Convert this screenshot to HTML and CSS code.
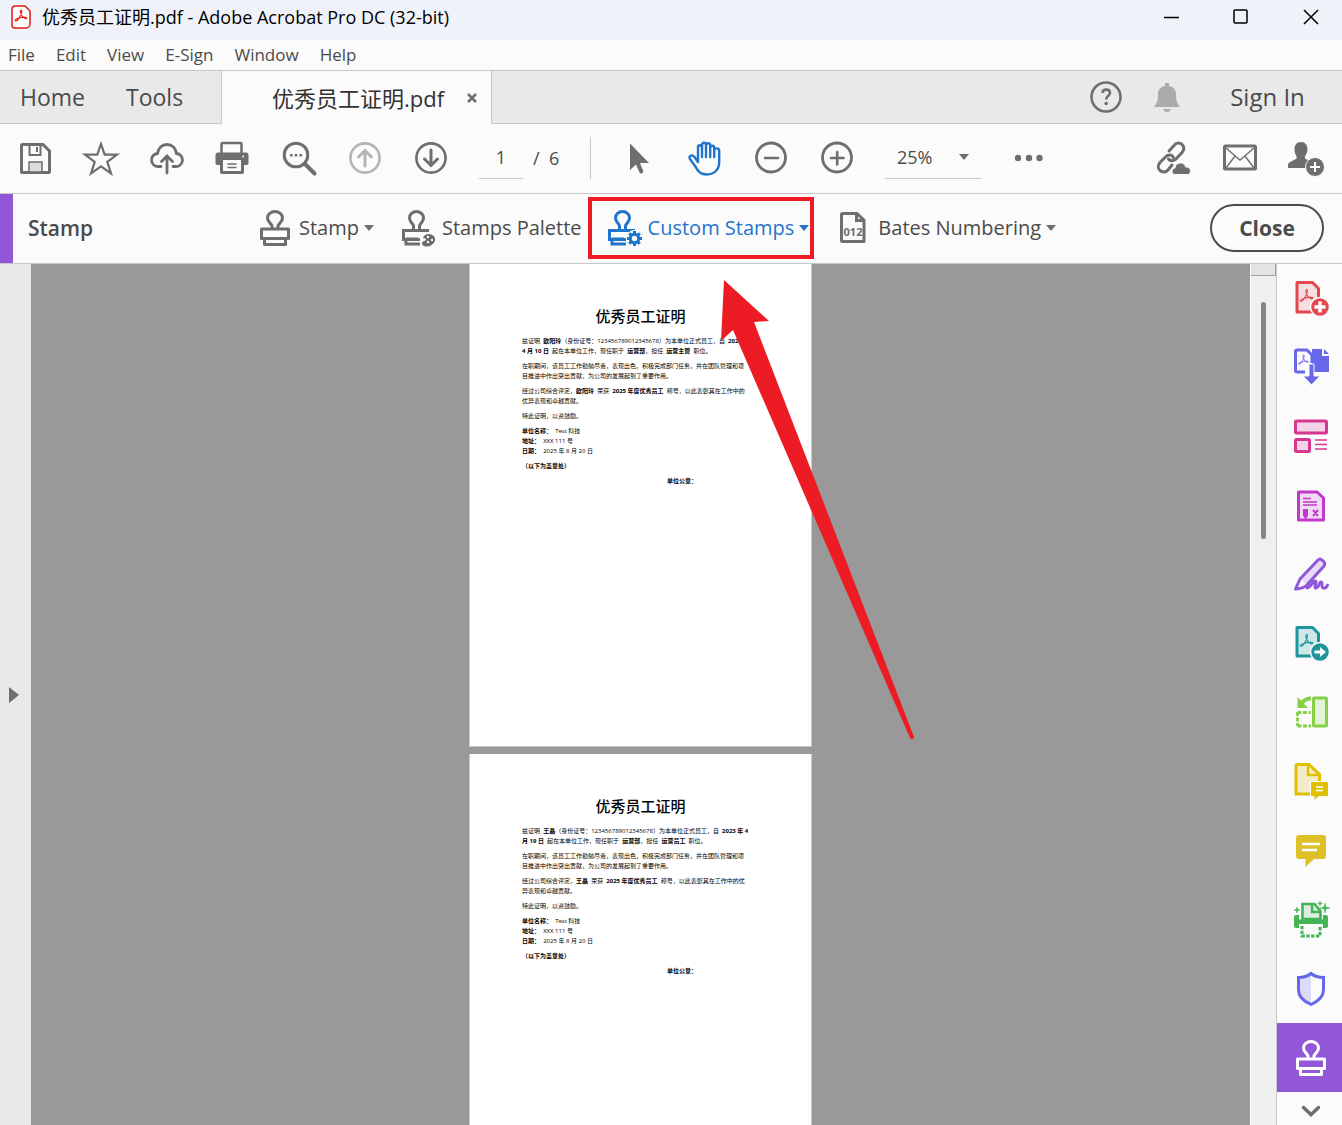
FILE: index.html
```
<!DOCTYPE html>
<html lang="en">

<head>
    <meta charset="UTF-8">
    <meta name="viewport" content="width=device-width, initial-scale=1.0" />
    <title>优秀员工证明.pdf - Adobe Acrobat Pro DC (32-bit)</title>
    <link rel="stylesheet" href="styles.css">
</head>

<body>
    <!-- Shared icon shapes -->
    <svg class="symbols" width="0" height="0" aria-hidden="true">
        <symbol id="stamp" viewBox="0 0 36 36">
            <path d="M15 19v-3c0-2-4.500-3.500-4.500-8a7.500 6.500 0 0 1 15 0c0 4.500-4.500 6-4.500 8v3" fill="none" stroke="currentColor" stroke-width="3" />
            <path d="M4.500 19h27v9.500h-27z" fill="none" stroke="currentColor" stroke-width="3" stroke-linejoin="round" />
            <path d="M7.500 29v5.500h21V29" fill="none" stroke="currentColor" stroke-width="3" stroke-linejoin="round" />
        </symbol>
        <symbol id="stamp-part" viewBox="0 0 36 36">
            <path d="M13.500 19v-3c0-2-4-3.500-4-8a7 6.500 0 0 1 14 0c0 4.500-4 6-4 8v3" fill="none" stroke="currentColor" stroke-width="3" />
            <path d="M29 20.500H3.500v9H20M6 29v5h14M6 29h12" fill="none" stroke="currentColor" stroke-width="3" />
        </symbol>
        <symbol id="acrobat" viewBox="0 0 16 16">
            <path d="M1.500 13.500C0 12 7 9.500 12 9.500c4 0 3 2 1 1.500C10 10 7.500 6 7.300 3c0-2.500 2-2.500 1.600 0C8.500 6 5 12.500 3 13.500c-.6.300-1.200.300-1.500 0z" fill="none" stroke="currentColor" stroke-width="1.200" />
        </symbol>
        <symbol id="caret" viewBox="0 0 10 6">
            <path d="M0 0h10L5 6z" fill="currentColor" />
        </symbol>
    </svg>

    <header class="title-bar">
        <svg class="app-icon" viewBox="0 0 20 24">
            <path d="M4 1h10l5 5v13a4 4 0 0 1-4 4H4a3 3 0 0 1-3-3V4a3 3 0 0 1 3-3z" fill="#fff" stroke="#e8170c" stroke-width="1.500" />
            <use href="#acrobat" x="3" y="4" width="14" height="14" />
        </svg>
        <h1 class="window-title">优秀员工证明.pdf - Adobe Acrobat Pro DC (32-bit)</h1>
        <div class="window-buttons">
            <button aria-label="Minimize"><svg viewBox="0 0 16 16"><path d="M1 8.500h15" /></svg></button>
            <button aria-label="Maximize"><svg viewBox="0 0 16 16"><rect x="1" y="1" width="13" height="13" rx="1" /></svg></button>
            <button aria-label="Close window"><svg viewBox="0 0 16 16"><path d="M1 1l14 14M15 1L1 15" /></svg></button>
        </div>
    </header>

    <nav class="menu-bar">
        <a href="#">File</a>
        <a href="#">Edit</a>
        <a href="#">View</a>
        <a href="#">E-Sign</a>
        <a href="#">Window</a>
        <a href="#">Help</a>
    </nav>

    <div class="tab-bar">
        <button class="tab tab-home">Home</button>
        <button class="tab tab-tools">Tools</button>
        <div class="tab-active">
            <span>优秀员工证明.pdf</span>
            <button class="tab-close" aria-label="Close tab"><svg viewBox="0 0 10 10"><path d="M1 1l8 8M9 1L1 9" stroke="#6e6e6e" stroke-width="2.500" /></svg></button>
        </div>
        <div class="account">
            <button aria-label="Help"><svg class="icon" viewBox="0 0 36 36">
                <circle cx="18" cy="18" r="14.500" fill="none" stroke="currentColor" stroke-width="2.500" />
                <path d="M14.500 14c0-4.500 7.500-4.500 7.500 0 0 2.500-3.800 3-3.800 6.500" fill="none" stroke="currentColor" stroke-width="2.600" />
                <circle cx="18.200" cy="24.500" r="1.800" fill="currentColor" />
            </svg></button>
            <button class="bell" aria-label="Notifications"><svg class="icon" viewBox="0 0 36 36">
                <path d="M16 4h4v3c5 1 7 4 7 8 0 7 1 9 4 13H5c3-4 4-6 4-13 0-4 2-7 7-8z" fill="currentColor" />
                <path d="M14 30h8c-1 4-7 4-8 0z" fill="currentColor" />
            </svg></button>
            <button class="sign-in">Sign In</button>
        </div>
    </div>

    <div class="toolbar">
        <button class="tool" aria-label="Save"><svg class="icon" viewBox="0 0 36 36">
            <path d="M4.500 5.500a1 1 0 0 1 1-1H26l6.500 6.500v20.500a1 1 0 0 1-1 1h-26a1 1 0 0 1-1-1z" fill="none" stroke="currentColor" stroke-width="3" />
            <path d="M12.500 4v11h11V4" fill="none" stroke="currentColor" stroke-width="2" />
            <path d="M19 7h2v5h-2z" fill="currentColor" />
            <path d="M12 33V22h13v11z" fill="#dcdcdc" stroke="currentColor" stroke-width="1.500" />
            <path d="M4 32.500h28" stroke="currentColor" stroke-width="2.500" />
        </svg></button>
        <button class="tool" aria-label="Star"><svg class="icon" viewBox="0 0 36 36">
            <path d="M18 4l3.700 10.600H34l-9.700 7.300 3.700 11.600L18 26.400 8 33.500l3.700-11.600L2 14.600h12.300z" fill="none" stroke="currentColor" stroke-width="2.200" />
        </svg></button>
        <button class="tool" aria-label="Upload"><svg class="icon" viewBox="0 0 36 36">
            <path d="M12 26.500H9.500a6.500 6.500 0 0 1-1-13C9 8 13 4.500 18 4.500s9 3.500 9.500 9a6.500 6.500 0 0 1-1 13H24" fill="none" stroke="currentColor" stroke-width="2.800" stroke-linecap="round" />
            <path d="M18 33V17M12.500 21.500L18 16l5.500 5.500" fill="none" stroke="currentColor" stroke-width="2.800" stroke-linecap="round" />
        </svg></button>
        <button class="tool" aria-label="Print"><svg class="icon" viewBox="1 0 36 36">
            <path d="M7.500 13V4q0-1 1-1h18q1 0 1 1v9" fill="none" stroke="currentColor" stroke-width="2.500" />
            <path d="M4 12.500h28q2.500 0 2.500 2.500v8q0 2-2 2H30v7q0 2-2 2H8q-2 0-2-2v-7H3.500q-2 0-2-2v-8q0-2.500 2.500-2.500z" fill="currentColor" />
            <path d="M9 20h18v11H9z" fill="#fbfbfb" />
            <path d="M13.500 24h9M13.500 27.500h9" stroke="currentColor" stroke-width="1.500" />
            <circle cx="29" cy="16.500" r="1" fill="#fbfbfb" />
        </svg></button>
        <button class="tool" aria-label="Find"><svg class="icon" viewBox="0 0 36 36">
            <circle cx="15" cy="15" r="11.800" fill="none" stroke="currentColor" stroke-width="3" />
            <path d="M24 24l9.500 9.500" stroke="currentColor" stroke-width="4" stroke-linecap="round" />
            <path d="M9 14h2.600v2.600H9zM13.700 14h2.600v2.600h-2.600zM18.500 14h2.600v2.600h-2.600z" fill="currentColor" />
        </svg></button>
        <button class="tool disabled" aria-label="Previous page"><svg class="icon" viewBox="0 0 36 36">
            <circle cx="18" cy="18" r="14.600" fill="none" stroke="currentColor" stroke-width="2.600" />
            <path d="M18 26V11M11.500 17L18 10.500l6.500 6.500" fill="none" stroke="currentColor" stroke-width="3" stroke-linecap="round" />
        </svg></button>
        <button class="tool" aria-label="Next page"><svg class="icon" viewBox="0 0 36 36">
            <circle cx="18" cy="18" r="14.600" fill="none" stroke="currentColor" stroke-width="2.600" />
            <path d="M18 10v15M11.500 19l6.500 6.500 6.500-6.500" fill="none" stroke="currentColor" stroke-width="3" stroke-linecap="round" />
        </svg></button>
        <input class="page-input" type="text" value="1" aria-label="Page number">
        <span class="page-total">/&nbsp; 6</span>
        <span class="separator"></span>
        <button class="tool" aria-label="Select"><svg class="icon" viewBox="0 0 36 36">
            <path d="M9 3.500v26.500l6-5.500 3.500 8q.8 1.500 2.500.8t1.200-2.300L19 23h9z" fill="currentColor" />
        </svg></button>
        <button class="tool selected" aria-label="Hand"><svg class="icon" viewBox="0 0 36 36">
            <path d="M11 20V7.500c0-3 4-3 4 0V17 5c0-3 4-3 4 0v12V5.500c0-3 4.200-3 4.200 0V17 8c0-3 4-3 4 0v9-6c0-3.500 5-3.500 5 0v11c0 8-5.500 12.500-12.500 12.500-6 0-9-3-11-7.500L3 19c-2-3 2-5 4.500-2l3.500 5z" fill="none" stroke="currentColor" stroke-width="2.400" stroke-linejoin="round" />
        </svg></button>
        <button class="tool" aria-label="Zoom out"><svg class="icon" viewBox="0 0 36 36">
            <circle cx="18" cy="17.500" r="14.500" fill="none" stroke="currentColor" stroke-width="2.800" />
            <path d="M12 18h13" stroke="currentColor" stroke-width="2.600" stroke-linecap="round" />
        </svg></button>
        <button class="tool" aria-label="Zoom in"><svg class="icon" viewBox="0 0 36 36">
            <circle cx="18" cy="17.500" r="14.500" fill="none" stroke="currentColor" stroke-width="2.800" />
            <path d="M12 18h12.500M18.200 12v12.500" stroke="currentColor" stroke-width="2.600" stroke-linecap="round" />
        </svg></button>
        <div class="zoom-level">
            <select aria-label="Zoom level">
                <option>25%</option>
                <option>50%</option>
                <option>100%</option>
            </select>
            <svg class="caret"><use href="#caret" /></svg>
        </div>
        <button class="tool" aria-label="More tools"><svg class="icon" viewBox="0 0 36 36">
            <circle cx="7" cy="18" r="3.200" fill="currentColor" />
            <circle cx="18" cy="18" r="3.200" fill="currentColor" />
            <circle cx="28.500" cy="18" r="3.200" fill="currentColor" />
        </svg></button>
        <div class="share-tools">
            <button class="tool" aria-label="Share link"><svg class="icon" viewBox="1 0 36 36">
                <g fill="none" stroke="currentColor" stroke-width="3" stroke-linecap="round">
                    <path d="M14 11l5.500-6a5 5 0 0 1 8 0c2 2.500 1.500 5-.5 7.500L21 19c-2.500 2.500-6 2-7.500 0" />
                    <path d="M17 25l-4 5c-2 2.500-5.500 2.500-8 .5s-2-5.500 0-8l6-6c2.500-2.500 6-2 7.500 1" />
                </g>
                <path d="M20 34.500c-4 0-4-6 0-6.500 0-6 10-7 10.500-1 6-1 6.500 7.500 2 7.500z" fill="currentColor" stroke="#fbfbfb" />
            </svg></button>
            <button class="tool" aria-label="Email"><svg class="icon" viewBox="0 0 36 36">
                <rect x="2.500" y="6" width="31" height="23" rx="1" fill="none" stroke="currentColor" stroke-width="3" />
                <path d="M4 8l14 12L32 8M4 28l9-12M32 28l-9-12" fill="none" stroke="currentColor" stroke-width="1.400" />
            </svg></button>
            <button class="tool" aria-label="Share with people"><svg class="icon" viewBox="0 0 36 36">
                <path d="M13 2c4.500 0 6.500 3.500 6.500 7.500 0 3-1.500 5-2.500 7-.5 2 .5 2.500 3 3.500l4 2v6H0v-3c0-2.500 4-4 7-5.500 2-1 2-1.500 1.500-3-1-2-2-4-2-7C6.500 5 8.500 2 13 2z" fill="currentColor" />
                <circle cx="27" cy="27" r="9.500" fill="currentColor" stroke="#fbfbfb" />
                <path d="M22 27h10M27 22v10" stroke="#fff" stroke-width="2" />
            </svg></button>
        </div>
    </div>

    <div class="stamp-bar">
        <h2 class="stamp-title">Stamp</h2>
        <div class="stamp-tools">
            <button><svg class="icon"><use href="#stamp" /></svg>Stamp<svg class="caret"><use href="#caret" /></svg></button>
            <button class="palette"><svg class="icon" viewBox="0 0 36 36">
                <use href="#stamp-part" />
                <path d="M23 28c1-4 6-5 9.500-3s4 7-1 10-10 1-9.500-2c0-2 4-2 4-3.500s-2-1-3-1.500z" fill="currentColor" />
                <path d="M27 26h2v2h-2zM31 29h2v2h-2zM27 31h2v2h-2z" fill="#fbfbfb" />
            </svg>Stamps Palette</button>
            <button class="highlight"><svg class="icon" viewBox="0 0 36 36">
                <use href="#stamp-part" />
                <circle cx="28.500" cy="28.500" r="8.500" fill="#fbfbfb" />
                <circle cx="28.500" cy="28.500" r="4.200" fill="none" stroke="currentColor" stroke-width="3" />
                <path d="M28.500 21v3M28.500 33v3M21 28.500h3M33 28.500h3M23.200 23.200l2.200 2.200M31.600 31.600l2.200 2.200M33.800 23.200l-2.200 2.200M25.400 31.600l-2.200 2.200" stroke="currentColor" stroke-width="3" />
            </svg>Custom Stamps<svg class="caret"><use href="#caret" /></svg></button>
            <button class="bates"><svg class="icon" viewBox="0 0 36 36">
                <path d="M6.500 3.500H21l7 6.500v21.500H6.500q-1 0-1-1v-26q0-1 1-1z" fill="none" stroke="currentColor" stroke-width="3" stroke-linejoin="round" />
                <path d="M19 3l10 9H19z" fill="currentColor" />
                <path d="M22 6.500V9h2.500z" fill="#fbfbfb" />
                <text class="bates-number" x="17" y="26" text-anchor="middle">012</text>
            </svg>Bates Numbering<svg class="caret"><use href="#caret" /></svg></button>
        </div>
        <button class="close-button">Close</button>
    </div>

    <main class="workspace">
        <button class="left-rail" aria-label="Show navigation pane"><svg viewBox="0 0 10 16"><path d="M0 0l10 8-10 8z" fill="#6e6e6e" /></svg></button>

        <div class="document">
            <article class="page">
                <h3>优秀员工证明</h3>
                <p>兹证明&nbsp; <b>欧阳玲</b>（身份证号：123456789012345678）为本单位正式员工，自&nbsp; <b>2023 年</b><br><b>4 月 10 日</b>&nbsp; 起在本单位工作，现任职于&nbsp; <b>运营部</b>，担任&nbsp; <b>运营主管</b>&nbsp; 职位。</p>
                <p>在职期间，该员工工作勤勉尽责，表现出色，积极完成部门任务，并在团队管理和项<br>目推进中作出突出贡献，为公司的发展起到了重要作用。</p>
                <p>经过公司综合评定，<b>欧阳玲</b>&nbsp; 荣获&nbsp; <b>2025 年度优秀员工</b>&nbsp; 称号，以此表彰其在工作中的<br>优异表现和卓越贡献。</p>
                <p>特此证明，以资鼓励。</p>
                <p><b>单位名称：</b>&nbsp; Test 科技<br><b>地址：</b>&nbsp; XXX 111 号<br><b>日期：</b>&nbsp; 2025 年 8 月 20 日</p>
                <p><b>（以下为盖章处）</b></p>
                <p class="seal"><b>单位公章：</b></p>

                <!-- Pointer to the highlighted tool -->
                <svg class="arrow" viewBox="0 0 194 460">
                    <path d="M4 0l45 41-15 1 160 415q-1 4-4 1L13 50 1 61z" fill="#ed1c24" />
                </svg>
            </article>
            <article class="page">
                <h3>优秀员工证明</h3>
                <p>兹证明&nbsp; <b>王晶</b>（身份证号：123456789012345678）为本单位正式员工，自&nbsp; <b>2023 年 4</b><br><b>月 19 日</b>&nbsp; 起在本单位工作，现任职于&nbsp; <b>运营部</b>，担任&nbsp; <b>运营员工</b>&nbsp; 职位。</p>
                <p>在职期间，该员工工作勤勉尽责，表现出色，积极完成部门任务，并在团队管理和项<br>目推进中作出突出贡献，为公司的发展起到了重要作用。</p>
                <p>经过公司综合评定，<b>王晶</b>&nbsp; 荣获&nbsp; <b>2025 年度优秀员工</b>&nbsp; 称号，以此表彰其在工作中的优<br>异表现和卓越贡献。</p>
                <p>特此证明，以资鼓励。</p>
                <p><b>单位名称：</b>&nbsp; Test 科技<br><b>地址：</b>&nbsp; XXX 111 号<br><b>日期：</b>&nbsp; 2025 年 8 月 20 日</p>
                <p><b>（以下为盖章处）</b></p>
                <p class="seal"><b>单位公章：</b></p>
            </article>
        </div>

        <div class="scrollbar">
            <div class="split-box"></div>
            <div class="thumb"></div>
        </div>

        <nav class="right-rail">
            <button class="red" aria-label="Create PDF"><svg class="icon" viewBox="1 2 36 36">
                <path d="M5 3.500h15.500l6 6V33H5z" fill="#f6dfe1" stroke="currentColor" stroke-width="3" stroke-linejoin="round" />
                <use href="#acrobat" x="7" y="8" width="15" height="18" />
                <circle cx="28" cy="28" r="9.500" fill="currentColor" stroke="#fafafa" stroke-width="1.500" />
                <path d="M22.500 28h11M28 22.500v11" stroke="#fff" stroke-width="3.500" />
            </svg></button>
            <button class="blue" aria-label="Export PDF"><svg class="icon" viewBox="0 2 36 36">
                <path d="M12 24H4q-1.500 0-1.500-1.500v-19Q2.500 2 4 2h10l5 5v8" fill="none" stroke="currentColor" stroke-width="3" />
                <path d="M19 1h10v7h7v16H19zM31 1l5 5h-5z" fill="currentColor" />
                <use href="#acrobat" x="4" y="6" width="13" height="12" />
                <path d="M16 16h5v12h6l-8.500 9-8.500-9h6z" fill="currentColor" stroke="#fafafa" />
            </svg></button>
            <button class="pink" aria-label="Organize Pages"><svg class="icon" viewBox="0 1 36 36">
                <rect x="2.500" y="3" width="31" height="12" rx="1" fill="#f3d3e6" stroke="currentColor" stroke-width="3" />
                <rect x="2.500" y="21.500" width="14" height="12" rx="1" fill="#f3d3e6" stroke="currentColor" stroke-width="3" />
                <path d="M22 22h12M22 26.500h12M22 31h12" stroke="currentColor" stroke-width="1.500" />
            </svg></button>
            <button class="magenta" aria-label="Redact"><svg class="icon" viewBox="0 0 36 36">
                <path d="M5.500 4H24l6.500 6v22h-25z" fill="#f0daf4" stroke="currentColor" stroke-width="3" stroke-linejoin="round" />
                <path d="M10 10.500h8M10 14h14M10 17h14" stroke="currentColor" stroke-width="1.500" />
                <path d="M11 22h3v5.500l-1.500 2-1.500-2zM20 22l5 6M25 22l-5 6" fill="currentColor" stroke="currentColor" stroke-width="2" />
            </svg></button>
            <button class="purple" aria-label="Fill and Sign"><svg class="icon" viewBox="0 1 36 36">
                <path d="M8 23L25 4q2-2 4 0l2 2q1.500 2 0 4L14 30z" fill="#e7dbf5" />
                <path d="M2.500 33L7 23 25 4q2-2 4 0l2 2q1.500 2 0 4L13 30c-4 3-7 2.500-10.500 3zM13 32c5 0 7-7 9-7 3 0-2 7 1 7s3-6 5-6 0 5 2 6 4-1 5-4" fill="none" stroke="currentColor" stroke-width="3" stroke-linejoin="round" />
            </svg></button>
            <button class="teal" aria-label="Send PDF"><svg class="icon" viewBox="1 2 36 36">
                <path d="M5 3.500h15.500l6 6V32H5z" fill="#cfe7e8" stroke="currentColor" stroke-width="3" stroke-linejoin="round" />
                <use href="#acrobat" x="7" y="8" width="15" height="18" />
                <circle cx="28" cy="28" r="9.500" fill="currentColor" stroke="#fafafa" stroke-width="1.500" />
                <path d="M22.500 26.500H28V23l6 5-6 5v-3.500h-5.500z" fill="#fff" />
            </svg></button>
            <button class="lime" aria-label="Compare"><svg class="icon" viewBox="0 1 36 36">
                <rect x="20.500" y="4" width="13" height="28" rx="1" fill="#e3f3d8" stroke="currentColor" stroke-width="3" />
                <path d="M4.500 18.500h13M4.500 32H18M4.500 18v14" fill="none" stroke="currentColor" stroke-width="2.800" stroke-dasharray="4 1.500" />
                <path d="M18 4.500q-5 0-9 4" fill="none" stroke="currentColor" stroke-width="4" />
                <path d="M4.500 3v11H15z" fill="currentColor" />
            </svg></button>
            <button class="yellow" aria-label="Review"><svg class="icon" viewBox="0 2 36 36">
                <path d="M4 2.500h12l10.500 10V32H3V3.500q0-1 1-1z" fill="#f4ecc6" stroke="currentColor" stroke-width="3" />
                <path d="M15 3v10h11" fill="none" stroke="currentColor" stroke-width="2.500" />
                <path d="M19 19.500h15q1.500 0 1.500 1.500v12q0 1.500-1.500 1.500H26l-5 4v-4h-2q-1.500 0-1.500-1.500V21q0-1.500 1.500-1.500z" fill="currentColor" stroke="#fafafa" />
                <path d="M23 25h7M23 28.500h7" stroke="#fff" stroke-width="1.500" />
            </svg></button>
            <button class="gold" aria-label="Comment"><svg class="icon" viewBox="0 1 36 36">
                <path d="M6 3h24q3 0 3 3v18q0 3-3 3H21l-8.500 8v-8H6q-3 0-3-3V6q0-3 3-3z" fill="currentColor" />
                <path d="M9 12h18M9 18h15" stroke="#fff" stroke-width="2.400" />
            </svg></button>
            <button class="green" aria-label="Scan and OCR"><svg class="icon" viewBox="0 0 36 36">
                <path d="M9.500 17V2h12l6 7v8z" fill="#dcefdf" stroke="currentColor" stroke-width="2.600" />
                <path d="M19 2v8h8" fill="none" stroke="currentColor" stroke-width="2.400" />
                <path d="M3 13h3v4.500h24V13h3q2 0 2 2v9q0 2-2 2h-3v-4H6v4H3q-2 0-2-2v-9q0-2 2-2z" fill="currentColor" />
                <path d="M9 24v10h18V24" fill="none" stroke="currentColor" stroke-width="3" stroke-dasharray="3.300 1.500" />
                <path d="M32 1l1 4 4 1-4 1-1 4-1-4-4-1 4-1zM27-1l.5 2 2 .5-2 .5-.5 2-.5-2-2-.5 2-.5zM4 5l.7 2L7 8l-2.300.7L4 11l-.7-2.300L1 8l2.300-1z" fill="currentColor" stroke="currentColor" stroke-width=".5" />
            </svg></button>
            <button class="blue" aria-label="Protect"><svg class="icon" viewBox="0 0 36 36">
                <path d="M18 3v30C10 29 5.500 25 5.500 19V7Q13 7 18 3z" fill="#dcdcf8" />
                <path d="M18 2.500q5 4 12.500 4V19c0 6.500-5 11-12.500 14.500C10 30 5.500 25.500 5.500 19V6.500q7.500 0 12.500-4z" fill="none" stroke="currentColor" stroke-width="3" />
            </svg></button>
            <button class="active" aria-label="Stamp"><svg class="icon"><use href="#stamp" /></svg></button>
            <button class="more" aria-label="More"><svg class="icon" viewBox="0 0 36 36">
                <path d="M10.500 15.500l7.500 7 7.500-7" fill="none" stroke="currentColor" stroke-width="3.500" stroke-linecap="round" />
            </svg></button>
        </nav>
    </main>
</body>

</html>
```
FILE: styles.css
```
* {
    box-sizing: border-box;
}

body {
    display: flex;
    flex-direction: column;
    height: 100vh;
    margin: 0;
    overflow: hidden;
    font-family: "Open Sans", "Noto Sans CJK SC", sans-serif;
    line-height: 28px;
    color: #4b4b4b;
    background: #fbfbfb;
}

h1,
h2,
h3,
p {
    margin: 0;
}

button {
    display: flex;
    align-items: center;
    justify-content: center;
    margin: 0;
    padding: 0;
    border: 0;
    background: none;
    font: inherit;
    color: inherit;
    white-space: nowrap;
}

svg {
    flex: none;
    overflow: visible;
}

.symbols {
    position: absolute;
}

.icon {
    width: 36px;
    height: 36px;
    color: #6e6e6e;
}

.caret {
    width: 10px;
    height: 6px;
    color: #6e6e6e;
}

/* Title bar */
.title-bar {
    display: flex;
    align-items: center;
    flex: none;
    height: 40px;
    padding: 0 0 6px 11px;
    background: #eff2f9;
    color: #000;
}

.app-icon {
    width: 20px;
    height: 24px;
    color: #e8170c;
}

.window-title {
    margin-left: 11px;
    font-size: 18px;
    font-weight: 400;
}

.window-buttons {
    display: flex;
    gap: 8px;
    margin-left: auto;
}

.window-buttons button {
    width: 62px;
    height: 34px;
}

.window-buttons svg {
    width: 16px;
    height: 16px;
    fill: none;
    stroke: #000;
    stroke-width: 1.5;
}

/* Menu */
.menu-bar {
    display: flex;
    align-items: center;
    gap: 21px;
    flex: none;
    height: 30px;
    padding-left: 8px;
    font-size: 17px;
}

.menu-bar a {
    color: #4b4b4b;
    text-decoration: none;
}

/* Tabs */
.tab-bar {
    display: flex;
    flex: none;
    height: 54px;
    border-top: 1px solid #c8c8c8;
    background: #e9e9e9;
    font-size: 23px;
}

.tab {
    justify-content: flex-start;
    border-bottom: 1px solid #c8c8c8;
}

.tab-home {
    width: 105px;
    padding-left: 20px;
}

.tab-tools {
    width: 116px;
    padding-left: 21px;
}

.tab-active {
    display: flex;
    align-items: center;
    justify-content: space-between;
    width: 271px;
    padding: 0 14px 0 50px;
    border: solid #c8c8c8;
    border-width: 0 1px;
    background: #fbfbfb;
    font-size: 22px;
    color: #323232;
}

.tab-close svg {
    width: 10px;
    height: 10px;
}

.account {
    display: flex;
    flex: 1;
    align-items: center;
    justify-content: flex-end;
    padding-right: 34px;
    border-bottom: 1px solid #c8c8c8;
}

.bell {
    margin: 0 42px 0 25px;
}

.bell .icon {
    color: #ababab;
}

.sign-in {
    width: 81px;
    font-size: 24px;
    font-weight: 500;
}

/* Main toolbar */
.toolbar {
    display: flex;
    align-items: center;
    flex: none;
    height: 70px;
    padding: 0 3px 2px 2px;
    border-bottom: 1px solid #c8c8c8;
    font-size: 18px;
}

.tool {
    flex: none;
    width: 66px;
    height: 66px;
}

.disabled .icon {
    color: #b4b4b4;
}

.selected .icon {
    color: #1f74cb;
}

.page-input {
    width: 44px;
    height: 42px;
    margin-left: 15px;
    padding: 0;
    border: 0;
    border-bottom: 1px solid #c8c8c8;
    background: none;
    font: inherit;
    color: inherit;
    text-align: center;
}

.page-total {
    width: 57px;
    padding-left: 10px;
}

.separator {
    width: 1px;
    height: 42px;
    margin: 0 15px 0 10px;
    background: #c8c8c8;
}

.zoom-level {
    display: flex;
    align-items: center;
    width: 96px;
    height: 42px;
    margin: 0 15px;
    padding-right: 12px;
    border-bottom: 1px solid #c8c8c8;
}

.zoom-level select {
    flex: 1;
    min-width: 0;
    height: 40px;
    padding: 0 0 0 12px;
    border: 0;
    background: none;
    appearance: none;
    font: inherit;
    color: inherit;
}

.share-tools {
    display: flex;
    margin-left: auto;
}

/* Stamp toolbar */
.stamp-bar {
    display: flex;
    align-items: center;
    flex: none;
    height: 70px;
    padding: 0 18px 2px 0;
    border-bottom: 1px solid #c8c8c8;
    background: linear-gradient(to right, #9256d9 13px, #fbfbfb 13px);
    font-size: 20px;
}

.stamp-title {
    width: 257px;
    padding-left: 28px;
    font-size: 21px;
    font-weight: 600;
}

.stamp-tools {
    display: flex;
    align-items: center;
}

.stamp-tools button {
    height: 62px;
}

.stamp-tools .icon {
    margin-right: 6px;
}

.stamp-tools .caret {
    margin-left: 5px;
}

.stamp-tools .palette {
    margin-left: 26px;
}

.stamp-tools .highlight {
    margin-left: 6px;
    padding: 0 1px 0 14px;
    border: 4px solid #ed1c24;
    color: #1f74cb;
}

.stamp-tools .bates {
    margin-left: 22px;
}

.highlight .icon,
.highlight .caret {
    color: #1f74cb;
}

.bates-number {
    font-size: 11px;
    font-weight: 700;
    fill: #6e6e6e;
}

.close-button {
    width: 114px;
    height: 48px;
    margin-left: auto;
    border: 2px solid #4b4b4b;
    border-radius: 24px;
    font-size: 21px;
    font-weight: 700;
}

/* Document area */
.workspace {
    display: flex;
    flex: 1;
    min-height: 0;
}

.left-rail {
    justify-content: flex-start;
    width: 31px;
    padding-left: 9px;
    background: #e9e9e9;
}

.left-rail svg {
    width: 10px;
    height: 16px;
}

.document {
    display: flex;
    flex-direction: column;
    align-items: center;
    flex: 1;
    gap: 7px;
    overflow: hidden;
    background: #999;
}

.page {
    position: relative;
    flex: none;
    width: 343px;
    height: 483px;
    padding: 40px 52px;
    border: solid #c8c8c8;
    border-width: 0 1px 1px;
    background: #fff;
    font-size: 6px;
    line-height: 10px;
    color: #000;
    white-space: nowrap;
}

.page h3 {
    margin-bottom: 8px;
    font-size: 15px;
    font-weight: 500;
    line-height: 24px;
    text-align: center;
}

.page p {
    margin-bottom: 5px;
}

.page .seal {
    padding-left: 145px;
}

.arrow {
    position: absolute;
    top: 16px;
    left: 250px;
    z-index: 1;
    width: 194px;
    height: 460px;
}

.scrollbar {
    width: 26px;
    border-left: 1px solid #fff;
    background: #efefef;
}

.split-box {
    height: 12px;
    border: solid #a0a0a0;
    border-width: 0 1px 1px 0;
    background: #e3e3e3;
}

.thumb {
    width: 5px;
    height: 237px;
    margin: 26px 0 0 10px;
    border-radius: 3px;
    background: #858585;
}

/* Tool rail on the right */
.right-rail {
    width: 66px;
    border-left: 1px solid #c8c8c8;
    overflow: hidden;
}

.right-rail button {
    width: 100%;
    height: 69px;
    padding-left: 2px;
}

.right-rail .icon {
    color: inherit;
}

.right-rail .more {
    height: 36px;
    color: #6e6e6e;
}

.right-rail .active {
    background: #9256d9;
    color: #fff;
}

.red {
    color: #e34850;
}

.blue {
    color: #6767ec;
}

.pink {
    color: #d83790;
}

.magenta {
    color: #c038cc;
}

.purple {
    color: #9256d9;
}

.teal {
    color: #1d959b;
}

.lime {
    color: #85d044;
}

.yellow {
    color: #dfbf00;
}

.gold {
    color: #dfbf26;
}

.green {
    color: #44b556;
}
```
